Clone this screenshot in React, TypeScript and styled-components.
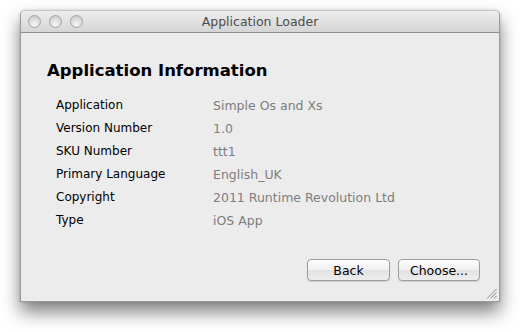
import React from "react";
import styled, { createGlobalStyle } from "styled-components";

const Global = createGlobalStyle`
  html, body { margin: 0; padding: 0; background: #ffffff; }
  body { font-family: "Lucida Grande", "DejaVu Sans", sans-serif; }
`;

const Page = styled.div`
  width: 520px;
  height: 332px;
  padding: 10px 20px 0 20px;
  box-sizing: border-box;
`;

const Window = styled.div`
  width: 480px;
  height: 292px;
  box-sizing: border-box;
  background: #ececec;
  border: 1px solid #9a9a9a;
  border-top-color: #c8c8c8;
  border-radius: 5px 5px 0 0;
  box-shadow: 0 10px 18px rgba(0, 0, 0, 0.5), 0 0 3px rgba(0,0,0,0.15);
  display: flex;
  flex-direction: column;
  position: relative;
`;

const TitleBar = styled.div`
  height: 21px;
  flex: none;
  border-bottom: 1px solid #8e8e8e;
  border-radius: 4px 4px 0 0;
  background: linear-gradient(#ededed, #d5d5d5);
  display: flex;
  align-items: center;
  padding-left: 7px;
  position: relative;
`;

const Lights = styled.div`
  display: flex;
  gap: 8px;
`;

const Light = styled.div`
  width: 13px;
  height: 13px;
  border-radius: 50%;
  box-sizing: border-box;
  border: 1px solid #a4a4a4;
  background: radial-gradient(circle at 50% 75%, #f6f6f6 0%, #dadada 55%, #c2c2c2 100%);
`;

const Title = styled.div`
  position: absolute;
  left: 0;
  right: 0;
  top: 0;
  bottom: 0;
  display: flex;
  align-items: center;
  justify-content: center;
  font-size: 12.5px;
  color: #4d4d4d;
  pointer-events: none;
`;

const Content = styled.div`
  flex: 1;
  display: flex;
  flex-direction: column;
  padding: 27px 0 0 26px;
`;

const Heading = styled.h1`
  margin: 0 0 12px 0;
  font-size: 16.5px;
  font-weight: bold;
  line-height: 22px;
  color: #000;
`;

const Table = styled.div`
  display: grid;
  grid-template-columns: 157px auto;
  padding-left: 9px;
`;

const Label = styled.div`
  font-size: 12px;
  line-height: 23px;
  color: #000;
`;

const Value = styled.div`
  font-size: 12.5px;
  line-height: 23px;
  color: #7d7d7d;
`;

const Footer = styled.div`
  margin-top: auto;
  display: flex;
  justify-content: flex-end;
  gap: 8px;
  padding: 0 19px 20px 0;
`;

const Button = styled.button<{ $w: number }>`
  width: ${(p) => p.$w}px;
  height: 22px;
  box-sizing: border-box;
  border: 1px solid #9b9b9b;
  border-radius: 4px;
  background: linear-gradient(#fdfdfd, #f0f0f0 50%, #e2e2e2 51%, #ededed);
  font-family: "Lucida Grande", "DejaVu Sans", sans-serif;
  font-size: 12.5px;
  color: #000;
  padding: 0;
  box-shadow: 0 1px 1px rgba(0,0,0,0.12);
`;

const Grip = styled.svg`
  position: absolute;
  right: 2px;
  bottom: 2px;
`;

const rows: [string, string][] = [
  ["Application", "Simple Os and Xs"],
  ["Version Number", "1.0"],
  ["SKU Number", "ttt1"],
  ["Primary Language", "English_UK"],
  ["Copyright", "2011 Runtime Revolution Ltd"],
  ["Type", "iOS App"],
];

export default function App() {
  return (
    <Page>
      <Global />
      <Window>
        <TitleBar>
          <Lights>
            <Light />
            <Light />
            <Light />
          </Lights>
          <Title>Application Loader</Title>
        </TitleBar>
        <Content>
          <Heading>Application Information</Heading>
          <Table>
            {rows.map(([k, v]) => (
              <React.Fragment key={k}>
                <Label>{k}</Label>
                <Value>{v}</Value>
              </React.Fragment>
            ))}
          </Table>
          <Footer>
            <Button $w={83}>Back</Button>
            <Button $w={82}>Choose...</Button>
          </Footer>
        </Content>
        <Grip width="11" height="11" viewBox="0 0 11 11">
          <g stroke="#8a8a8a" strokeWidth="1">
            <line x1="1" y1="10.5" x2="10.5" y2="1" />
            <line x1="4.5" y1="10.5" x2="10.5" y2="4.5" />
            <line x1="8" y1="10.5" x2="10.5" y2="8" />
          </g>
        </Grip>
      </Window>
    </Page>
  );
}
